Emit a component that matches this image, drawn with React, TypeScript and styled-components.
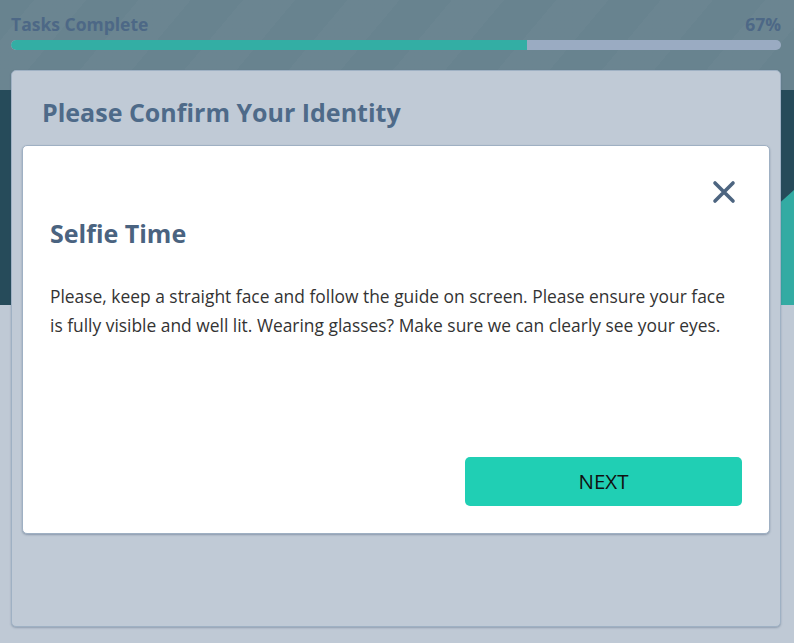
import React from "react";
import styled, { createGlobalStyle } from "styled-components";

const Global = createGlobalStyle`
  html, body { margin: 0; padding: 0; }
  body { font-family: "Open Sans", "Liberation Sans", sans-serif; }
  * { box-sizing: border-box; }
`;

const Page = styled.div`
  position: relative;
  width: 794px;
  height: 643px;
  overflow: hidden;
  background: linear-gradient(to bottom, #68838f 0 90px, #264b5a 90px 305px, #bfc9d5 305px);
`;

const Stripes = styled.div`
  position: absolute;
  inset: 0 0 auto 0;
  height: 90px;
  background: repeating-linear-gradient(
    -50deg,
    rgba(255, 255, 255, 0) 0 40px,
    rgba(255, 255, 255, 0.018) 40px 80px
  );
`;

const Wedge = styled.div`
  position: absolute;
  right: 0;
  top: 90px;
  width: 40px;
  height: 215px;
  background: #33aba3;
  clip-path: polygon(0 136px, 100% 100px, 100% 100%, 0 100%);
`;

const Content = styled.div`
  position: relative;
  padding: 14px 13px 0 11px;
  display: flex;
  flex-direction: column;
`;

const ProgressLabels = styled.div`
  display: flex;
  justify-content: space-between;
  align-items: center;
  height: 20px;
  font-weight: 700;
  font-size: 17.5px;
  color: #4d6886;
`;

const Track = styled.div`
  margin-top: 6px;
  height: 10px;
  border-radius: 5px;
  background: #9aabc2;
  overflow: hidden;
`;

const Fill = styled.div`
  height: 100%;
  background: #33aea4;
  border-radius: 5px 0 0 5px;
`;

const Panel = styled.section`
  margin-top: 20px;
  height: 557px;
  background: #c0cad6;
  border: 1px solid #9fb1c4;
  border-radius: 5px;
  box-shadow: 0 1px 2px rgba(60, 80, 110, 0.35);
  padding: 23px 30px;
`;

const PanelTitle = styled.h1`
  margin: 0;
  font-size: 25px;
  line-height: 36px;
  font-weight: 700;
  color: #4e6a89;
`;

const Modal = styled.div`
  position: absolute;
  left: 22px;
  top: 145px;
  width: 748px;
  height: 389px;
  background: #ffffff;
  border: 1px solid #9fb0c3;
  border-radius: 5px;
  box-shadow: 0 1px 2px rgba(60, 80, 110, 0.4);
  padding: 28px 27px 27px 27px;
  display: flex;
  flex-direction: column;
`;

const CloseRow = styled.div`
  display: flex;
  justify-content: flex-end;
  height: 36px;
  padding-right: 4px;
`;

const CloseButton = styled.button`
  border: 0;
  background: none;
  padding: 0;
  width: 28px;
  height: 36px;
  display: flex;
  align-items: center;
  justify-content: center;
  cursor: pointer;
`;

const ModalTitle = styled.h2`
  margin: 6px 0 0 0;
  font-size: 25px;
  line-height: 34px;
  font-weight: 700;
  color: #4a6380;
`;

const Body = styled.p`
  margin: 32px 0 0 0;
  font-size: 17.4px;
  line-height: 29px;
  color: #333333;
`;

const Footer = styled.div`
  margin-top: auto;
  display: flex;
  justify-content: flex-end;
`;

const NextButton = styled.button`
  width: 277px;
  height: 49px;
  border: 0;
  border-radius: 5px;
  background: #20cfb4;
  color: #111;
  font-family: "Open Sans", "Liberation Sans", sans-serif;
  font-size: 20.5px;
  padding-bottom: 2px;
  cursor: pointer;
`;

export default function App() {
  const pct = 67;
  return (
    <>
      <Global />
      <Page>
        <Stripes />
        <Wedge />
        <Content>
          <ProgressLabels>
            <span>Tasks Complete</span>
            <span>{pct}%</span>
          </ProgressLabels>
          <Track>
            <Fill style={{ width: `${pct}%` }} />
          </Track>
          <Panel>
            <PanelTitle>Please Confirm Your Identity</PanelTitle>
          </Panel>
        </Content>
        <Modal role="dialog">
          <CloseRow>
            <CloseButton aria-label="Close">
              <svg width="24" height="24" viewBox="0 0 24 24">
                <path d="M3 3 L21 21 M21 3 L3 21" stroke="#4d6580" strokeWidth="3.6" strokeLinecap="round" />
              </svg>
            </CloseButton>
          </CloseRow>
          <ModalTitle>Selfie Time</ModalTitle>
          <Body>
            Please, keep a straight face and follow the guide on screen. Please ensure your face is fully visible and well lit. Wearing glasses? Make sure we can clearly see your eyes.
          </Body>
          <Footer>
            <NextButton>NEXT</NextButton>
          </Footer>
        </Modal>
      </Page>
    </>
  );
}
